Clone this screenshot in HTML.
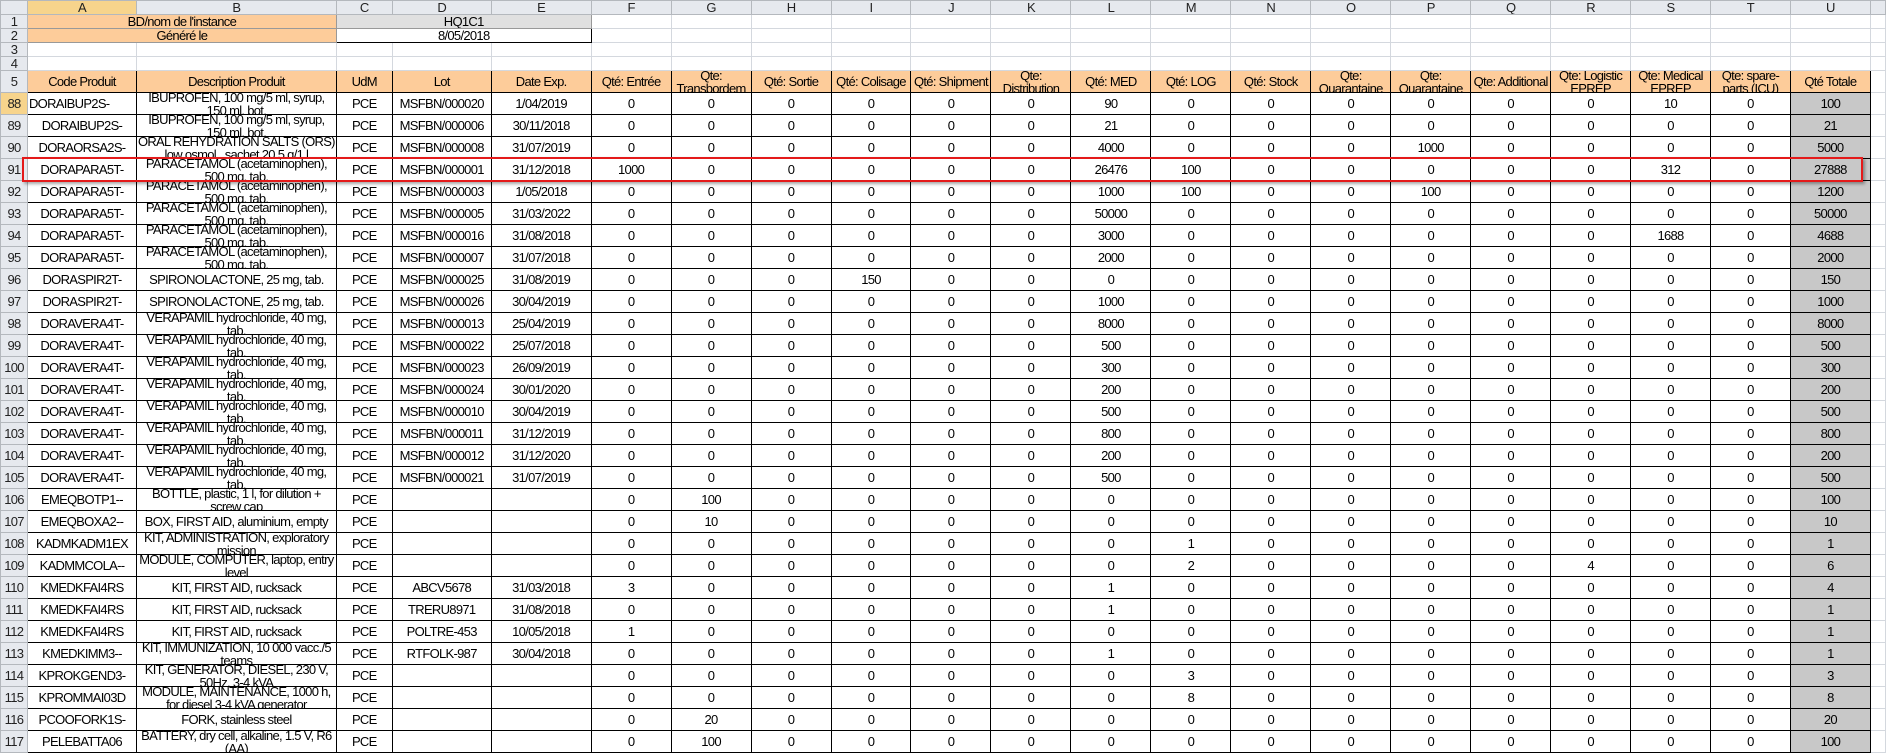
<!DOCTYPE html>
<html><head><meta charset="utf-8"><style>
body{margin:0;width:1886px;height:753px;overflow:hidden;background:#fff;position:relative}
table{border-collapse:collapse;table-layout:fixed;position:absolute;left:0;top:0}
td,th{padding:0;font:13px/13px "Liberation Sans",sans-serif;letter-spacing:-0.7px;text-align:center;overflow:hidden;white-space:nowrap;color:#000}
th{background:#e6e9ee;border:1px solid #b4b8bd;font-weight:normal;color:#222;font-size:13px}
th.s{background:#f7d48c}
.h td,.h th{height:13px}
.t td{border:1px solid #d4d8de;height:13px}
.c td{border:1px solid #000;background:#fdcc9a;height:21px}
.d td{border:1px solid #000;height:21px}
.d th,.c th{height:21px}
td.l{text-align:left;padding-left:1px}
td.g{background:#c8c8c8}
td.e{border:1px solid #d4d8de!important;background:#fff!important}
.w div{height:21px;overflow:hidden;display:flex;align-items:center;justify-content:center;white-space:normal;line-height:13px;padding:0 1px}
.o{background:#fdcc9a;border:1px solid #999!important}
.red{position:absolute;left:22px;top:157px;width:1837px;height:21px;border:2px solid #e41a1a;box-shadow:2px 2px 3px rgba(0,0,0,.35)}
</style></head><body>
<table>
<colgroup><col style="width:27px"><col style="width:109px"><col style="width:200px"><col style="width:56px"><col style="width:99px"><col style="width:100px"><col style="width:80px"><col style="width:80px"><col style="width:80px"><col style="width:80px"><col style="width:80px"><col style="width:80px"><col style="width:80px"><col style="width:80px"><col style="width:80px"><col style="width:80px"><col style="width:80px"><col style="width:80px"><col style="width:80px"><col style="width:80px"><col style="width:80px"><col style="width:80px"><col style="width:15px"></colgroup>
<tr class="h"><th></th><th class="s">A</th><th>B</th><th>C</th><th>D</th><th>E</th><th>F</th><th>G</th><th>H</th><th>I</th><th>J</th><th>K</th><th>L</th><th>M</th><th>N</th><th>O</th><th>P</th><th>Q</th><th>R</th><th>S</th><th>T</th><th>U</th><th></th></tr>
<tr class="t"><th>1</th><td colspan="2" class="o">BD/nom de l'instance</td><td colspan="3" style="background:#e0e0e0;border:1px solid #999">HQ1C1</td><td></td><td></td><td></td><td></td><td></td><td></td><td></td><td></td><td></td><td></td><td></td><td></td><td></td><td></td><td></td><td></td><td></td></tr>
<tr class="t"><th>2</th><td colspan="2" class="o">Généré le</td><td colspan="3" style="border:1px solid #000">8/05/2018</td><td></td><td></td><td></td><td></td><td></td><td></td><td></td><td></td><td></td><td></td><td></td><td></td><td></td><td></td><td></td><td></td><td></td></tr>
<tr class="t"><th>3</th><td></td><td></td><td></td><td></td><td></td><td></td><td></td><td></td><td></td><td></td><td></td><td></td><td></td><td></td><td></td><td></td><td></td><td></td><td></td><td></td><td></td><td></td></tr>
<tr class="t"><th>4</th><td></td><td></td><td></td><td></td><td></td><td></td><td></td><td></td><td></td><td></td><td></td><td></td><td></td><td></td><td></td><td></td><td></td><td></td><td></td><td></td><td></td><td></td></tr>
<tr class="c"><th>5</th><td>Code Produit</td><td>Description Produit</td><td>UdM</td><td>Lot</td><td>Date Exp.</td><td>Qté: Entrée</td><td class="w"><div>Qte: Transbordem</div></td><td>Qté: Sortie</td><td>Qté: Colisage</td><td>Qté: Shipment</td><td class="w"><div>Qte: Distribution</div></td><td>Qté: MED</td><td>Qté: LOG</td><td>Qté: Stock</td><td class="w"><div>Qte: Quarantaine</div></td><td class="w"><div>Qte: Quarantaine</div></td><td class="w"><div>Qte: Additional</div></td><td class="w"><div>Qte: Logistic EPREP</div></td><td class="w"><div>Qte: Medical EPREP</div></td><td class="w"><div>Qte: spare-parts (ICU)</div></td><td>Qté Totale</td><td class="e"></td></tr>
<tr class="d"><th class="s">88</th><td class="l">DORAIBUP2S-</td><td class="w"><div>IBUPROFEN, 100 mg/5 ml, syrup, 150 ml, bot.</div></td><td>PCE</td><td>MSFBN/000020</td><td>1/04/2019</td><td>0</td><td>0</td><td>0</td><td>0</td><td>0</td><td>0</td><td>90</td><td>0</td><td>0</td><td>0</td><td>0</td><td>0</td><td>0</td><td>10</td><td>0</td><td class="g">100</td><td class="e"></td></tr>
<tr class="d"><th>89</th><td>DORAIBUP2S-</td><td class="w"><div>IBUPROFEN, 100 mg/5 ml, syrup, 150 ml, bot.</div></td><td>PCE</td><td>MSFBN/000006</td><td>30/11/2018</td><td>0</td><td>0</td><td>0</td><td>0</td><td>0</td><td>0</td><td>21</td><td>0</td><td>0</td><td>0</td><td>0</td><td>0</td><td>0</td><td>0</td><td>0</td><td class="g">21</td><td class="e"></td></tr>
<tr class="d"><th>90</th><td>DORAORSA2S-</td><td class="w"><div>ORAL REHYDRATION SALTS (ORS) low osmol., sachet 20.5 g/1 l</div></td><td>PCE</td><td>MSFBN/000008</td><td>31/07/2019</td><td>0</td><td>0</td><td>0</td><td>0</td><td>0</td><td>0</td><td>4000</td><td>0</td><td>0</td><td>0</td><td>1000</td><td>0</td><td>0</td><td>0</td><td>0</td><td class="g">5000</td><td class="e"></td></tr>
<tr class="d"><th>91</th><td>DORAPARA5T-</td><td class="w"><div>PARACETAMOL (acetaminophen), 500 mg, tab.</div></td><td>PCE</td><td>MSFBN/000001</td><td>31/12/2018</td><td>1000</td><td>0</td><td>0</td><td>0</td><td>0</td><td>0</td><td>26476</td><td>100</td><td>0</td><td>0</td><td>0</td><td>0</td><td>0</td><td>312</td><td>0</td><td class="g">27888</td><td class="e"></td></tr>
<tr class="d"><th>92</th><td>DORAPARA5T-</td><td class="w"><div>PARACETAMOL (acetaminophen), 500 mg, tab.</div></td><td>PCE</td><td>MSFBN/000003</td><td>1/05/2018</td><td>0</td><td>0</td><td>0</td><td>0</td><td>0</td><td>0</td><td>1000</td><td>100</td><td>0</td><td>0</td><td>100</td><td>0</td><td>0</td><td>0</td><td>0</td><td class="g">1200</td><td class="e"></td></tr>
<tr class="d"><th>93</th><td>DORAPARA5T-</td><td class="w"><div>PARACETAMOL (acetaminophen), 500 mg, tab.</div></td><td>PCE</td><td>MSFBN/000005</td><td>31/03/2022</td><td>0</td><td>0</td><td>0</td><td>0</td><td>0</td><td>0</td><td>50000</td><td>0</td><td>0</td><td>0</td><td>0</td><td>0</td><td>0</td><td>0</td><td>0</td><td class="g">50000</td><td class="e"></td></tr>
<tr class="d"><th>94</th><td>DORAPARA5T-</td><td class="w"><div>PARACETAMOL (acetaminophen), 500 mg, tab.</div></td><td>PCE</td><td>MSFBN/000016</td><td>31/08/2018</td><td>0</td><td>0</td><td>0</td><td>0</td><td>0</td><td>0</td><td>3000</td><td>0</td><td>0</td><td>0</td><td>0</td><td>0</td><td>0</td><td>1688</td><td>0</td><td class="g">4688</td><td class="e"></td></tr>
<tr class="d"><th>95</th><td>DORAPARA5T-</td><td class="w"><div>PARACETAMOL (acetaminophen), 500 mg, tab.</div></td><td>PCE</td><td>MSFBN/000007</td><td>31/07/2018</td><td>0</td><td>0</td><td>0</td><td>0</td><td>0</td><td>0</td><td>2000</td><td>0</td><td>0</td><td>0</td><td>0</td><td>0</td><td>0</td><td>0</td><td>0</td><td class="g">2000</td><td class="e"></td></tr>
<tr class="d"><th>96</th><td>DORASPIR2T-</td><td class="w"><div>SPIRONOLACTONE, 25 mg, tab.</div></td><td>PCE</td><td>MSFBN/000025</td><td>31/08/2019</td><td>0</td><td>0</td><td>0</td><td>150</td><td>0</td><td>0</td><td>0</td><td>0</td><td>0</td><td>0</td><td>0</td><td>0</td><td>0</td><td>0</td><td>0</td><td class="g">150</td><td class="e"></td></tr>
<tr class="d"><th>97</th><td>DORASPIR2T-</td><td class="w"><div>SPIRONOLACTONE, 25 mg, tab.</div></td><td>PCE</td><td>MSFBN/000026</td><td>30/04/2019</td><td>0</td><td>0</td><td>0</td><td>0</td><td>0</td><td>0</td><td>1000</td><td>0</td><td>0</td><td>0</td><td>0</td><td>0</td><td>0</td><td>0</td><td>0</td><td class="g">1000</td><td class="e"></td></tr>
<tr class="d"><th>98</th><td>DORAVERA4T-</td><td class="w"><div>VERAPAMIL hydrochloride, 40 mg, tab.</div></td><td>PCE</td><td>MSFBN/000013</td><td>25/04/2019</td><td>0</td><td>0</td><td>0</td><td>0</td><td>0</td><td>0</td><td>8000</td><td>0</td><td>0</td><td>0</td><td>0</td><td>0</td><td>0</td><td>0</td><td>0</td><td class="g">8000</td><td class="e"></td></tr>
<tr class="d"><th>99</th><td>DORAVERA4T-</td><td class="w"><div>VERAPAMIL hydrochloride, 40 mg, tab.</div></td><td>PCE</td><td>MSFBN/000022</td><td>25/07/2018</td><td>0</td><td>0</td><td>0</td><td>0</td><td>0</td><td>0</td><td>500</td><td>0</td><td>0</td><td>0</td><td>0</td><td>0</td><td>0</td><td>0</td><td>0</td><td class="g">500</td><td class="e"></td></tr>
<tr class="d"><th>100</th><td>DORAVERA4T-</td><td class="w"><div>VERAPAMIL hydrochloride, 40 mg, tab.</div></td><td>PCE</td><td>MSFBN/000023</td><td>26/09/2019</td><td>0</td><td>0</td><td>0</td><td>0</td><td>0</td><td>0</td><td>300</td><td>0</td><td>0</td><td>0</td><td>0</td><td>0</td><td>0</td><td>0</td><td>0</td><td class="g">300</td><td class="e"></td></tr>
<tr class="d"><th>101</th><td>DORAVERA4T-</td><td class="w"><div>VERAPAMIL hydrochloride, 40 mg, tab.</div></td><td>PCE</td><td>MSFBN/000024</td><td>30/01/2020</td><td>0</td><td>0</td><td>0</td><td>0</td><td>0</td><td>0</td><td>200</td><td>0</td><td>0</td><td>0</td><td>0</td><td>0</td><td>0</td><td>0</td><td>0</td><td class="g">200</td><td class="e"></td></tr>
<tr class="d"><th>102</th><td>DORAVERA4T-</td><td class="w"><div>VERAPAMIL hydrochloride, 40 mg, tab.</div></td><td>PCE</td><td>MSFBN/000010</td><td>30/04/2019</td><td>0</td><td>0</td><td>0</td><td>0</td><td>0</td><td>0</td><td>500</td><td>0</td><td>0</td><td>0</td><td>0</td><td>0</td><td>0</td><td>0</td><td>0</td><td class="g">500</td><td class="e"></td></tr>
<tr class="d"><th>103</th><td>DORAVERA4T-</td><td class="w"><div>VERAPAMIL hydrochloride, 40 mg, tab.</div></td><td>PCE</td><td>MSFBN/000011</td><td>31/12/2019</td><td>0</td><td>0</td><td>0</td><td>0</td><td>0</td><td>0</td><td>800</td><td>0</td><td>0</td><td>0</td><td>0</td><td>0</td><td>0</td><td>0</td><td>0</td><td class="g">800</td><td class="e"></td></tr>
<tr class="d"><th>104</th><td>DORAVERA4T-</td><td class="w"><div>VERAPAMIL hydrochloride, 40 mg, tab.</div></td><td>PCE</td><td>MSFBN/000012</td><td>31/12/2020</td><td>0</td><td>0</td><td>0</td><td>0</td><td>0</td><td>0</td><td>200</td><td>0</td><td>0</td><td>0</td><td>0</td><td>0</td><td>0</td><td>0</td><td>0</td><td class="g">200</td><td class="e"></td></tr>
<tr class="d"><th>105</th><td>DORAVERA4T-</td><td class="w"><div>VERAPAMIL hydrochloride, 40 mg, tab.</div></td><td>PCE</td><td>MSFBN/000021</td><td>31/07/2019</td><td>0</td><td>0</td><td>0</td><td>0</td><td>0</td><td>0</td><td>500</td><td>0</td><td>0</td><td>0</td><td>0</td><td>0</td><td>0</td><td>0</td><td>0</td><td class="g">500</td><td class="e"></td></tr>
<tr class="d"><th>106</th><td>EMEQBOTP1--</td><td class="w"><div>BOTTLE, plastic, 1 l, for dilution + screw cap</div></td><td>PCE</td><td></td><td></td><td>0</td><td>100</td><td>0</td><td>0</td><td>0</td><td>0</td><td>0</td><td>0</td><td>0</td><td>0</td><td>0</td><td>0</td><td>0</td><td>0</td><td>0</td><td class="g">100</td><td class="e"></td></tr>
<tr class="d"><th>107</th><td>EMEQBOXA2--</td><td class="w"><div>BOX, FIRST AID, aluminium, empty</div></td><td>PCE</td><td></td><td></td><td>0</td><td>10</td><td>0</td><td>0</td><td>0</td><td>0</td><td>0</td><td>0</td><td>0</td><td>0</td><td>0</td><td>0</td><td>0</td><td>0</td><td>0</td><td class="g">10</td><td class="e"></td></tr>
<tr class="d"><th>108</th><td>KADMKADM1EX</td><td class="w"><div>KIT, ADMINISTRATION, exploratory mission</div></td><td>PCE</td><td></td><td></td><td>0</td><td>0</td><td>0</td><td>0</td><td>0</td><td>0</td><td>0</td><td>1</td><td>0</td><td>0</td><td>0</td><td>0</td><td>0</td><td>0</td><td>0</td><td class="g">1</td><td class="e"></td></tr>
<tr class="d"><th>109</th><td>KADMMCOLA--</td><td class="w"><div>MODULE, COMPUTER, laptop, entry level</div></td><td>PCE</td><td></td><td></td><td>0</td><td>0</td><td>0</td><td>0</td><td>0</td><td>0</td><td>0</td><td>2</td><td>0</td><td>0</td><td>0</td><td>0</td><td>4</td><td>0</td><td>0</td><td class="g">6</td><td class="e"></td></tr>
<tr class="d"><th>110</th><td>KMEDKFAI4RS</td><td class="w"><div>KIT, FIRST AID, rucksack</div></td><td>PCE</td><td>ABCV5678</td><td>31/03/2018</td><td>3</td><td>0</td><td>0</td><td>0</td><td>0</td><td>0</td><td>1</td><td>0</td><td>0</td><td>0</td><td>0</td><td>0</td><td>0</td><td>0</td><td>0</td><td class="g">4</td><td class="e"></td></tr>
<tr class="d"><th>111</th><td>KMEDKFAI4RS</td><td class="w"><div>KIT, FIRST AID, rucksack</div></td><td>PCE</td><td>TRERU8971</td><td>31/08/2018</td><td>0</td><td>0</td><td>0</td><td>0</td><td>0</td><td>0</td><td>1</td><td>0</td><td>0</td><td>0</td><td>0</td><td>0</td><td>0</td><td>0</td><td>0</td><td class="g">1</td><td class="e"></td></tr>
<tr class="d"><th>112</th><td>KMEDKFAI4RS</td><td class="w"><div>KIT, FIRST AID, rucksack</div></td><td>PCE</td><td>POLTRE-453</td><td>10/05/2018</td><td>1</td><td>0</td><td>0</td><td>0</td><td>0</td><td>0</td><td>0</td><td>0</td><td>0</td><td>0</td><td>0</td><td>0</td><td>0</td><td>0</td><td>0</td><td class="g">1</td><td class="e"></td></tr>
<tr class="d"><th>113</th><td>KMEDKIMM3--</td><td class="w"><div>KIT, IMMUNIZATION, 10 000 vacc./5 teams</div></td><td>PCE</td><td>RTFOLK-987</td><td>30/04/2018</td><td>0</td><td>0</td><td>0</td><td>0</td><td>0</td><td>0</td><td>1</td><td>0</td><td>0</td><td>0</td><td>0</td><td>0</td><td>0</td><td>0</td><td>0</td><td class="g">1</td><td class="e"></td></tr>
<tr class="d"><th>114</th><td>KPROKGEND3-</td><td class="w"><div>KIT, GENERATOR, DIESEL, 230 V, 50Hz, 3-4 kVA</div></td><td>PCE</td><td></td><td></td><td>0</td><td>0</td><td>0</td><td>0</td><td>0</td><td>0</td><td>0</td><td>3</td><td>0</td><td>0</td><td>0</td><td>0</td><td>0</td><td>0</td><td>0</td><td class="g">3</td><td class="e"></td></tr>
<tr class="d"><th>115</th><td>KPROMMAI03D</td><td class="w"><div>MODULE, MAINTENANCE, 1000 h, for diesel 3-4 kVA generator</div></td><td>PCE</td><td></td><td></td><td>0</td><td>0</td><td>0</td><td>0</td><td>0</td><td>0</td><td>0</td><td>8</td><td>0</td><td>0</td><td>0</td><td>0</td><td>0</td><td>0</td><td>0</td><td class="g">8</td><td class="e"></td></tr>
<tr class="d"><th>116</th><td>PCOOFORK1S-</td><td class="w"><div>FORK, stainless steel</div></td><td>PCE</td><td></td><td></td><td>0</td><td>20</td><td>0</td><td>0</td><td>0</td><td>0</td><td>0</td><td>0</td><td>0</td><td>0</td><td>0</td><td>0</td><td>0</td><td>0</td><td>0</td><td class="g">20</td><td class="e"></td></tr>
<tr class="d"><th>117</th><td>PELEBATTA06</td><td class="w"><div>BATTERY, dry cell, alkaline, 1.5 V, R6 (AA)</div></td><td>PCE</td><td></td><td></td><td>0</td><td>100</td><td>0</td><td>0</td><td>0</td><td>0</td><td>0</td><td>0</td><td>0</td><td>0</td><td>0</td><td>0</td><td>0</td><td>0</td><td>0</td><td class="g">100</td><td class="e"></td></tr>
</table>
<div class="red"></div>
</body></html>
